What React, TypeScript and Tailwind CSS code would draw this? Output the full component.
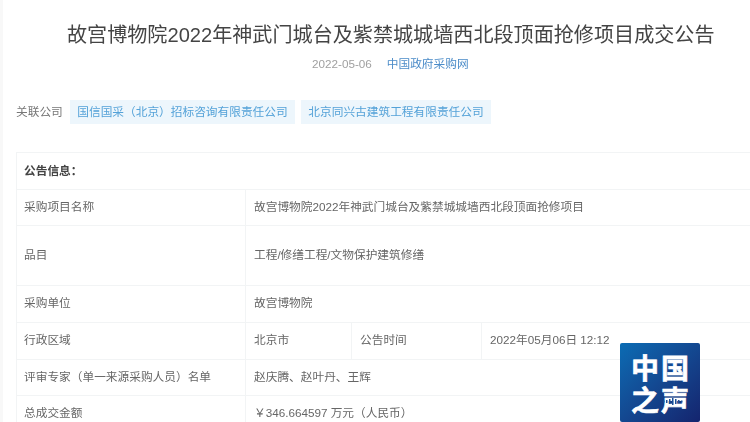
import React from "react";

const font = "font-['Liberation_Sans','Noto_Sans_CJK_SC',sans-serif]";

function Row({ label, value, height }: { label: string; value: string; height: string }) {
  return (
    <div className={`flex border-b border-[#f2f4f5] ${height}`}>
      <div className="w-[229px] shrink-0 flex items-center pl-[7px] pb-[2px] border-r border-[#f2f4f5]">{label}</div>
      <div className="flex-1 flex items-center pl-[8px] pb-[2px] whitespace-nowrap">{value}</div>
    </div>
  );
}

export default function App() {
  return (
    <div className={`relative w-[750px] h-[422px] overflow-hidden bg-white text-[11.7px] text-[#666] ${font}`}>
      <div className="blur-[0.5px] pl-[13px] border-l-[3px] border-[#f8f8f8] h-full">
        <h1 className="pt-[22px] pl-[51px] text-[20.1px] leading-[26px] font-normal text-[#444] whitespace-nowrap">
          故宫博物院2022年神武门城台及紫禁城城墙西北段顶面抢修项目成交公告
        </h1>

        <div className="mt-[8px] pl-[296px] flex gap-[15px] leading-[16px] whitespace-nowrap">
          <span className="text-[#a0a0a0]">2022-05-06</span>
          <span className="text-[#4a8bc8]">中国政府采购网</span>
        </div>

        <div className="mt-[28px] flex items-center h-[24px] whitespace-nowrap">
          <span className="w-[54px] text-[#777]">关联公司</span>
          <span className="h-[24px] w-[225px] flex items-center justify-center bg-[#edf6fc] text-[#54a2d8]">
            国信国采（北京）招标咨询有限责任公司
          </span>
          <span className="ml-[6px] h-[24px] w-[190px] flex items-center justify-center bg-[#edf6fc] text-[#54a2d8]">
            北京同兴古建筑工程有限责任公司
          </span>
        </div>

        <div className="mt-[28px] w-[760px] border-t border-l border-[#f2f4f5]">
          <div className="h-[37px] flex items-center pl-[7px] border-b border-[#f2f4f5] font-bold text-[#444]">
            公告信息：
          </div>
          <Row height="h-[36px]" label="采购项目名称" value="故宫博物院2022年神武门城台及紫禁城城墙西北段顶面抢修项目" />
          <Row height="h-[60px]" label="品目" value="工程/修缮工程/文物保护建筑修缮" />
          <Row height="h-[37px]" label="采购单位" value="故宫博物院" />
          <div className="flex h-[37px] pb-[0px] border-b border-[#f2f4f5] whitespace-nowrap">
            <div className="w-[229px] shrink-0 flex items-center pl-[7px] pb-[2px] border-r border-[#f2f4f5]">行政区域</div>
            <div className="w-[106px] shrink-0 flex items-center pl-[8px] pb-[2px] border-r border-[#f2f4f5]">北京市</div>
            <div className="w-[130px] shrink-0 flex items-center pl-[8px] pb-[2px] border-r border-[#f2f4f5]">公告时间</div>
            <div className="flex-1 flex items-center pl-[8px] pb-[2px]">2022年05月06日 12:12</div>
          </div>
          <Row height="h-[36px]" label="评审专家（单一来源采购人员）名单" value="赵庆腾、赵叶丹、王辉" />
          <Row height="h-[36px]" label="总成交金额" value="￥346.664597 万元（人民币）" />
        </div>
      </div>

      <div className="absolute left-[620px] top-[343px] w-[80px] h-[79px] rounded-[2px] bg-gradient-to-br from-[#0a6cb4] to-[#14246e] flex flex-col items-center justify-center text-white font-bold text-[28px] leading-[32px] tracking-[2px] [-webkit-text-stroke:0.6px_white] font-['Noto_Sans_CJK_SC',sans-serif]">
        <span className="pl-[2px]">中国</span>
        <span className="relative pl-[2px]">
          之声
          <svg className="absolute left-[33px] top-[15px]" width="24" height="7" viewBox="0 0 24 7" fill="#1a4f98">
            <rect x="1" y="2.5" width="1.5" height="2" />
            <rect x="4" y="2" width="1.5" height="3" />
            <rect x="7" y="1" width="1.5" height="5" />
            <rect x="10" y="0" width="1.5" height="7" />
            <rect x="13" y="1" width="1.5" height="5" />
            <rect x="16" y="2" width="1.5" height="3" />
            <rect x="19" y="2.5" width="1.5" height="2" />
          </svg>
        </span>
      </div>
    </div>
  );
}
